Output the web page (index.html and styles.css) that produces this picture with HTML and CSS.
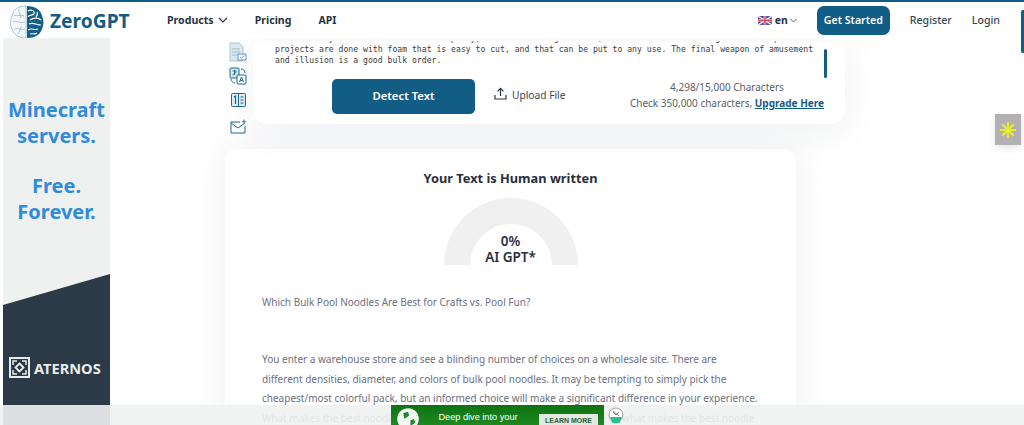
FILE: index.html
```
<!DOCTYPE html>
<html lang="en">
<head>
<meta charset="utf-8">
<title>ZeroGPT</title>
<link rel="stylesheet" href="styles.css">
</head>
<body>
<header class="site-header">
  <a class="logo">
    <svg class="logo-mark" viewBox="0 0 34 34" width="34" height="34">
      <path d="M16 1C9 1 3 4 2 11C0 15 0 20 2 24C4 30 9 33 16 33Z" fill="#f3f8fb" stroke="#8fb4c9" stroke-width=".8"/>
      <path d="M4 10C8 12 10 9 14 11M3 17C7 15 10 19 15 17M5 24C8 22 11 26 15 24M9 4C8 8 11 9 11 13M8 29C10 27 9 24 12 21" fill="none" stroke="#9bbdd0" stroke-width=".9"/>
      <path d="M17 1C25 1 31 5 32 11C34 15 34 20 32 24C30 30 25 33 17 33Z" fill="#135f88"/>
      <path d="M18 6C22 4 25 6 24 9C22 11 19 9 18 12M20 15C24 12 29 13 31 15M19 19C23 17 27 20 31 20M18 25C22 22 24 26 28 24M20 29C23 28 25 30 27 28M27 7C28 9 28 10 26 12" fill="none" stroke="#fff" stroke-width="1.1"/>
    </svg>
    <span class="logo-text">ZeroGPT</span>
  </a>
  <nav class="main-nav">
    <a class="nav-link nav-products">Products
      <svg width="10" height="6" viewBox="0 0 10 6"><path d="M1 1l4 4 4-4" fill="none" stroke="#27343f" stroke-width="1.1"/></svg>
    </a>
    <a class="nav-link">Pricing</a>
    <a class="nav-link">API</a>
  </nav>
  <div class="header-right">
    <svg class="flag" viewBox="0 0 14 9" width="14" height="9">
      <rect width="14" height="9" rx="1" fill="#3c4f9c"/>
      <path d="M0 0l14 9M14 0L0 9" stroke="#f3d9de" stroke-width="1.6"/>
      <path d="M7 0v9M0 4.500h14" stroke="#f3d9de" stroke-width="2.6"/>
      <path d="M7 0v9M0 4.500h14" stroke="#d9465f" stroke-width="1.4"/>
    </svg>
    <span class="lang">en</span>
    <svg class="lang-chev" width="7" height="5" viewBox="0 0 7 5"><path d="M.5 1l3 3 3-3" fill="none" stroke="#4a5560" stroke-width=".9"/></svg>
    <a class="cta">Get Started</a>
    <a class="plain-link register">Register</a>
    <a class="plain-link">Login</a>
  </div>
</header>

<div class="page">
  <aside class="side-ad">
    <div class="ad-copy">
      <p>Minecraft<br>servers.</p>
      <p class="ad-copy-second">Free.<br>Forever.</p>
    </div>
    <div class="ad-dark">
      <div class="aternos">
        <svg width="21" height="21" viewBox="0 0 21 21"><rect width="21" height="21" fill="#e9eced"/><rect x="2" y="2" width="17" height="17" fill="#2b3a46"/><path d="M4 8V4h4M13 4h4v4M17 13v4h-4M8 17H4v-4" fill="none" stroke="#e9eced" stroke-width="1.500"/><path d="M10.500 6.500l4 4-4 4-4-4z" fill="none" stroke="#e9eced" stroke-width="1.800"/></svg>
        <span>ATERNOS</span>
      </div>
    </div>
  </aside>

  <main class="content">
    <section class="tool">
      <div class="tool-icons">
        <svg width="18" height="20" viewBox="0 0 18 20"><path d="M1 1h9l4 4v14H1z" fill="#dbe8f0" stroke="#a9c5d6"/><path d="M3 7h8M3 10h8M3 13h6" stroke="#9dbccf"/><rect x="9" y="12" width="8" height="6" fill="#f3f8fb" stroke="#6d9cb7"/><path d="M11 15l1.500 1.500 2.500-3" fill="none" stroke="#6d9cb7" stroke-width=".8"/></svg>
        <svg width="18" height="18" viewBox="0 0 18 18"><rect x="1" y="1" width="9" height="10" rx="1" fill="#dbe8f0" stroke="#1d6a92"/><rect x="8" y="8" width="9" height="9" rx="1" fill="#fff" stroke="#1d6a92"/><path d="M3.500 4h4M5.500 3v5M3.500 8l4-3" fill="none" stroke="#1d6a92" stroke-width=".9"/><path d="M10.500 15l2-5 2 5M11.300 13.500h2.400" fill="none" stroke="#1d6a92"/><path d="M12 2c2 0 4 1 4 4M2 12c0 2 2 4 4 4" fill="none" stroke="#1d6a92"/></svg>
        <svg class="icon-book" width="15" height="14" viewBox="0 0 15 14"><rect x=".5" y=".5" width="14" height="13" rx="1" fill="#e3edf3" stroke="#1d6a92"/><path d="M7.500 1v12" stroke="#1d6a92"/><path d="M3 4l1.500-1v8M9.500 4h3M9.500 7h3M9.500 10h3" fill="none" stroke="#1d6a92" stroke-width="1.200"/></svg>
        <svg class="icon-mail" width="17" height="15" viewBox="0 0 17 15"><path d="M10 3H1v11h14V7" fill="#fff" stroke="#1d6a92"/><path d="M1 4l7 5 7-5" fill="none" stroke="#1d6a92"/><path d="M14 0l.8 1.800L16.600 2.600l-1.800.8L14 5.200l-.8-1.800-1.800-.8 1.800-.8z" fill="#5d94b3"/></svg>
      </div>
      <div class="tool-card">
        <div class="text-row">
          <div class="mono">
            <p>Whether they are sold in bulk for a party, or for crafting at home, it is worth remembering that most pool noodle</p>
            <p>projects are done with foam that is easy to cut, and that can be put to any use. The final weapon of amusement</p>
            <p>and illusion is a good bulk order.</p>
          </div>
          <span class="mini-scroll"></span>
        </div>
        <div class="actions">
          <button class="detect">Detect Text</button>
          <a class="upload">
            <svg width="13" height="13" viewBox="0 0 13 13"><path d="M6.500 9V1.500M3.500 4.300l3-3 3 3M1 8v4h11V8" fill="none" stroke="#2a3640" stroke-width="1.200"/></svg>
            Upload File
          </a>
          <div class="counts">
            <p class="count-top">4,298/15,000 Characters</p>
            <p>Check 350,000 characters, <a class="upgrade">Upgrade Here</a></p>
          </div>
        </div>
      </div>
    </section>

    <section class="result">
      <h2>Your Text is Human written</h2>
      <div class="gauge">
        <div class="gauge-label">0%<br>AI GPT*</div>
      </div>
      <p class="article-title">Which Bulk Pool Noodles Are Best for Crafts vs. Pool Fun?</p>
      <p class="article-body">You enter a warehouse store and see a blinding number of choices on a wholesale site. There are different densities, diameter, and colors of bulk pool noodles. It may be tempting to simply pick the cheapest/most colorful pack, but an informed choice will make a significant difference in your experience. What makes the best noodle for a large pool may not always be the same as what makes the best noodle</p>
    </section>
  </main>
</div>

<span class="page-scroll"></span>
<div class="widget">
  <svg width="18" height="18" viewBox="0 0 18 18"><path d="M9 1v16M1 9h16M3.300 3.300l11.400 11.400M14.700 3.300L3.300 14.700" stroke="#e8ec2e" stroke-width="2.200"/></svg>
</div>

<div class="bottom-bar">
  <div class="bottom-ad">
    <svg class="ad-globe" width="24" height="24" viewBox="0 0 20 20"><circle cx="10" cy="10" r="9" fill="#f4f8f2"/><path d="M6 5l4-1 1 3-4 3zM12 11l3-1 1 3-4 3z" fill="#1f8a2a"/></svg>
    <div class="ad-text">Deep dive into your<br>Xbox stats today!</div>
    <span class="ad-btn">LEARN MORE</span>
  </div>
  <svg class="ad-badge" width="16" height="20" viewBox="0 0 16 20"><circle cx="8" cy="9" r="7" fill="#fff" stroke="#9aa5a0"/><path d="M5 6l3 3 3-3M5 5l6 5" fill="none" stroke="#5b6862" stroke-width=".8"/><path d="M2 11h12l-2.500 6h-7z" fill="#2cc08a"/></svg>
</div>
</body>
</html>
```

FILE: styles.css
```
* { box-sizing: border-box; }
html, body { margin: 0; padding: 0; }
body {
  width: 1024px;
  height: 425px;
  overflow: hidden;
  position: relative;
  background: #fff;
  font-family: "Noto Sans", "Open Sans", sans-serif;
  color: #2a3640;
}
p, h2 { margin: 0; }

.site-header {
  height: 38px;
  border-top: 2px solid #125d85;
  background: #fff;
  display: flex;
  align-items: center;
  padding: 0 24px 0 10px;
}
.logo { display: flex; align-items: center; gap: 6px; width: 157px; }
.logo-mark { margin-top: 3px; flex: none; }
.logo-text {
  font-size: 19.2px;
  font-weight: 700;
  color: #125d85;
  line-height: 1;
  margin-top: 2px;
}
.main-nav { display: flex; align-items: center; gap: 27px; }
.nav-link { font-size: 10.6px; font-weight: 700; color: #27343f; }
.nav-products { display: flex; align-items: center; gap: 4px; }
.header-right { margin-left: auto; display: flex; align-items: center; }
.flag { margin-right: 3px; }
.lang { font-size: 10.5px; font-weight: 700; color: #27343f; }
.lang-chev { margin: 1px 0 0 2px; }
.cta {
  margin-left: 20px;
  width: 73px;
  height: 29px;
  border-radius: 7px;
  background: #125d85;
  color: #fff;
  font-size: 10.6px;
  font-weight: 600;
  display: flex;
  align-items: center;
  justify-content: center;
}
.plain-link { font-size: 10.6px; color: #3a4650; font-weight: 500; }
.register { margin: 0 20px 0 20px; }

.page { display: flex; height: 387px; overflow: hidden; padding-left: 3px; }

.side-ad {
  width: 107px;
  flex: none;
  background: #eff1f0;
  display: flex;
  flex-direction: column;
  justify-content: space-between;
}
.ad-copy {
  padding-top: 59px;
  text-align: center;
  font-size: 20px;
  line-height: 26px;
  font-weight: 700;
  color: #2f8bdc;
}
.ad-copy-second { margin-top: 24px; }
.ad-dark {
  height: 151px;
  background: #2b3a46;
  clip-path: polygon(0 31px, 100% 0, 100% 100%, 0 100%);
  padding: 83px 0 0 6px;
}
.aternos { display: flex; align-items: center; gap: 4px; color: #e9eced; font-size: 14.6px; font-weight: 700; }

.content { flex: none; width: 730px; padding-left: 115px; }
.tool { display: flex; height: 83px; margin-top: 3px; }
.tool-icons {
  width: 28px;
  flex: none;
  display: flex;
  flex-direction: column;
  align-items: center;
  gap: 5px;
  padding: 1px 2px 0 0;
  height: 96px;
}
.icon-book { margin-top: 3px; }
.icon-mail { margin-top: 7px; }
.tool-card {
  width: 592px;
  flex: none;
  background: #fff;
  border-radius: 0 0 14px 14px;
  box-shadow: 0 8px 36px rgba(30, 40, 70, .07);
  display: flex;
  flex-direction: column;
  justify-content: flex-end;
  padding: 0 18px 10px 22px;
  overflow: hidden;
}
.text-row { display: flex; align-items: flex-start; justify-content: space-between; }
.mono {
  font-family: "DejaVu Sans Mono", "Liberation Mono", monospace;
  font-size: 8.15px;
  line-height: 11px;
  color: #3b3b3b;
  white-space: nowrap;
  width: 539px;
  overflow: hidden;
  padding-bottom: 13px;
}
.mini-scroll {
  width: 3px;
  height: 29px;
  margin-top: 16px;
  border-radius: 2px;
  background: #125d85;
  flex: none;
}
.actions { display: flex; align-items: center; padding-left: 57px; height: 35px; padding-right: 3px; }
.detect {
  width: 143px;
  height: 35px;
  border: 0;
  border-radius: 5px;
  background: #125d85;
  color: #fff;
  font: 600 11.3px "Noto Sans", sans-serif;
  padding: 0 0 2px;
}
.upload {
  margin-left: 19px;
  display: flex;
  align-items: center;
  gap: 5px;
  font-size: 10.2px;
  color: #3a4650;
  margin-top: -4px;
}
.upload svg { margin-top: -2px; }
.counts {
  margin-left: auto;
  text-align: center;
  font-size: 10px;
  line-height: 16px;
  color: #5a6066;
  margin-top: -3px;
}
.upgrade { color: #125d85; font-weight: 700; text-decoration: underline; }

.result {
  width: 571px;
  margin-top: 25px;
  height: 300px;
  background: #fff;
  border-radius: 12px;
  box-shadow: 0 0 36px rgba(30, 40, 70, .07);
  padding: 20px 37px 0;
}
.result h2 {
  font-size: 12.8px;
  line-height: 18px;
  font-weight: 700;
  color: #2b2f3c;
  text-align: center;
}
.gauge {
  width: 134px;
  height: 67px;
  margin: 11px auto 0;
  border: 26px solid #f0f0f0;
  border-bottom: 0;
  border-radius: 67px 67px 0 0;
  display: flex;
  align-items: flex-end;
  justify-content: center;
}
.gauge-label {
  flex: none;
  font-size: 13.5px;
  line-height: 16px;
  font-weight: 600;
  text-align: center;
  color: #2b2f3c;
  white-space: nowrap;
}
.article-title { margin-top: 27px; font-size: 10px; line-height: 20px; color: #6d6f82; }
.article-body { margin-top: 38px; font-size: 10px; line-height: 19.5px; color: #6d6f82; }

.page-scroll {
  position: absolute;
  right: 0;
  top: 10px;
  width: 3px;
  height: 43px;
  border-radius: 2px 0 0 2px;
  background: #125d85;
}
.widget {
  position: absolute;
  left: 995px;
  top: 114px;
  width: 26px;
  height: 31px;
  background: #b3b0b3;
  box-shadow: 0 3px 8px rgba(0, 0, 0, .1);
  display: flex;
  align-items: center;
  justify-content: center;
}
.bottom-bar {
  position: absolute;
  left: 0;
  right: 0;
  bottom: 0;
  height: 20px;
  background: rgba(240, 241, 241, .9);
  overflow: hidden;
  display: flex;
  align-items: flex-start;
  padding-left: 391px;
}
.bottom-ad {
  width: 213px;
  height: 36px;
  background: linear-gradient(#0f7212, #2a9a2e);
  display: flex;
  align-items: flex-start;
  padding: 2px 0 0 5px;
  color: #fff;
}
.ad-globe { flex: none; }
.ad-text {
  width: 90px;
  margin-left: 13px;
  font-family: "Liberation Sans", sans-serif;
  font-size: 9.2px;
  line-height: 12px;
  text-align: center;
  flex: none;
  padding-top: 4px;
}
.ad-btn {
  margin: 7px 0 0 16px;
  width: 59px;
  height: 16px;
  background: #e4e9e2;
  color: #2f5e35;
  font: 700 7px "Liberation Sans", sans-serif;
  line-height: 13px;
  text-align: center;
  white-space: nowrap;
}
.ad-badge { margin: 1px 0 0 4px; flex: none; }
```
